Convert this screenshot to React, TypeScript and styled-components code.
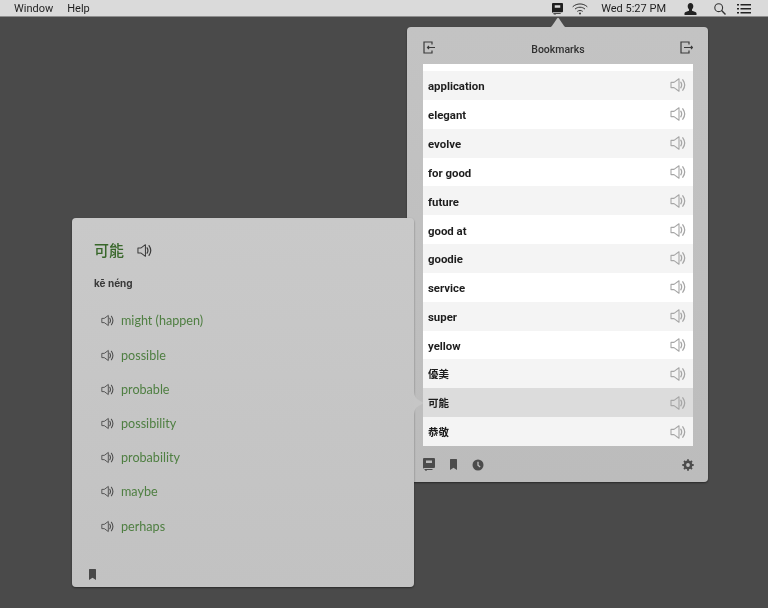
import React from "react";
import styled, { createGlobalStyle } from "styled-components";

const Global = createGlobalStyle`
  html, body { margin: 0; padding: 0; width: 768px; height: 608px; overflow: hidden; background: #4a4a4a; }
  #root { width: 768px; height: 608px; }
  * { box-sizing: border-box; }
`;

const Desktop = styled.div`
  position: relative;
  width: 768px;
  height: 608px;
  background: #4a4a4a;
  font-family: "Roboto", "Noto Sans CJK TC", sans-serif;
  overflow: hidden;
  filter: blur(0.35px);
`;

const MenuBar = styled.header`
  height: 17px;
  background: #dadada;
  border-bottom: 1px solid #8e8e8e;
  display: flex;
  align-items: center;
  padding: 1px 17px 0 14px;
  font-size: 11px;
  color: #1f1f1f;
`;
const MenuLeft = styled.nav`
  display: flex;
  gap: 14px;
  flex: 1;
`;
const MenuRight = styled.div`
  display: flex;
  align-items: center;
`;
const Clock = styled.span`
  margin: 0 18px 0 13px;
  white-space: nowrap;
`;
const MenuGap = styled.span<{ $w: number }>`
  display: block;
  flex: none;
  width: ${(p) => p.$w}px;
`;

const Panel = styled.section`
  position: absolute;
  left: 407px;
  top: 27px;
  width: 301px;
  height: 455px;
  background: linear-gradient(#c3c3c3, #bcbcbc);
  border-radius: 4px;
  box-shadow: 0 1px 2px rgba(0, 0, 0, 0.45);
  display: flex;
  flex-direction: column;
  padding: 0 15px 0 16px;
`;
const TopArrow = styled.svg`
  position: absolute;
  left: 139px;
  top: -10px;
  display: block;
`;
const PanelHeader = styled.div`
  height: 37px;
  flex: none;
  display: flex;
  align-items: center;
  justify-content: space-between;
  padding-top: 7px;
  color: #3a3a3a;
`;
const PanelTitle = styled.h1`
  margin: 0;
  font-size: 10.5px;
  font-weight: 500;
  color: #303030;
`;
const WordTable = styled.ul`
  list-style: none;
  margin: 0;
  padding: 7px 0 0;
  height: 382px;
  flex: none;
  background: #fff;
  display: grid;
  grid-auto-rows: 28.85px;
`;
const WordRow = styled.li<{ $tone: "white" | "grey" | "active" }>`
  display: flex;
  align-items: center;
  justify-content: space-between;
  padding: 0 7px 0 5px;
  background: ${(p) => (p.$tone === "active" ? "#dcdcdc" : p.$tone === "grey" ? "#f4f4f4" : "#fff")};
  font-weight: 700;
  color: #1d1d1d;
`;
const RowWord = styled.span<{ $cjk: boolean }>`
  font-size: ${(p) => (p.$cjk ? "10.5px" : "11.4px")};
  transform: translateY(${(p) => (p.$cjk ? "0" : "1px")});
`;
const RowSpeaker = styled.span`
  display: flex;
  color: #a6a6a6;
`;
const PanelFooter = styled.footer`
  flex: 1;
  display: flex;
  align-items: center;
  padding: 1px 0 0;
  margin-right: -1px;
  color: #4c4c4c;
`;
const FooterTabs = styled.div`
  display: flex;
  align-items: center;
  gap: 15px;
  flex: 1;
`;

const Detail = styled.section`
  position: absolute;
  left: 72px;
  top: 218px;
  width: 342px;
  height: 369px;
  background: linear-gradient(#c9c9c9, #c2c2c2);
  border-radius: 4px;
  box-shadow: 0 1px 2px rgba(0, 0, 0, 0.45);
  padding: 21px 0 0 22px;
  display: flex;
  flex-direction: column;
`;
const SideArrow = styled.svg`
  position: absolute;
  left: 342px;
  top: 171px;
  display: block;
`;
const HeadLine = styled.div`
  display: flex;
  align-items: center;
  gap: 13px;
  color: #3c3c3c;
`;
const HeadWord = styled.h2`
  margin: 0;
  font-size: 15px;
  line-height: 22px;
  font-weight: 500;
  color: #38672a;
  font-family: "Noto Sans CJK TC", sans-serif;
`;
const Pinyin = styled.div`
  margin-top: 15px;
  font-size: 10px;
  line-height: 14px;
  font-weight: 700;
  font-family: "Inter", sans-serif;
  color: #3a3a3a;
`;
const Meanings = styled.ul`
  list-style: none;
  margin: 13.85px 0 0;
  padding: 0 0 0 7px;
  display: grid;
  grid-auto-rows: 34.2px;
`;
const Meaning = styled.li`
  display: flex;
  align-items: center;
  gap: 7px;
  color: #4a4a4a;
  font-family: "Lato", sans-serif;
  font-size: 12.6px;
`;
const MeaningText = styled.span`
  color: #4f7f42;
`;
const DetailFooter = styled.footer`
  margin-top: auto;
  padding: 0 0 7px;
  margin-left: -5px;
  display: flex;
  color: #484848;
`;
const ExitSvg = styled.svg`
  display: block;
  margin-top: -3px;
`;

const Speaker = ({ size = 14 }: { size?: number }) => (
  <svg width={size} height={size} viewBox="0 0 16 16" fill="none" stroke="currentColor" strokeWidth={1.1}>
    <path d="M1 5.400h3L9 1.800v12.400L4 10.600H1z" strokeLinejoin="round" />
    <path d="M10.800 5.200c1.100 1.800 1.100 3.800 0 5.600M12.800 2.800c2.300 3.200 2.300 7.200 0 10.400" strokeLinecap="round" strokeWidth={1.3} />
  </svg>
);
const BookmarkIcon = ({ w = 7, h = 11 }: { w?: number; h?: number }) => (
  <svg width={w} height={h} viewBox="0 0 7 11" fill="currentColor">
    <path d="M0 .6Q0 0 .6 0h5.800Q7 0 7 .6V11L3.500 8.800 0 11z" />
  </svg>
);
const BookIcon = ({ size = 12 }: { size?: number }) => (
  <svg width={size} height={size + 1} viewBox="0 0 12 13" fill="currentColor">
    <path fillRule="evenodd" d="M1 0h10q1 0 1 1v8q0 1-1 1H1.500q-1.500 0-1.500 1V1q0-1 1-1zM3 2.500v2.500h6V2.500z" />
    <path d="M1.500 11h8v.9H4v1L3 12.300 2 12.900v-1h-.5z" />
  </svg>
);
const ClockIcon = () => (
  <svg width={12} height={12} viewBox="0 0 12 12">
    <circle cx="6" cy="6" r="5.500" fill="currentColor" />
    <path d="M6 2.800V6.200l2.200 1.700" fill="none" stroke="#c0c0c0" strokeWidth={1.300} />
  </svg>
);
const GearIcon = () => (
  <svg width={12} height={12} viewBox="0 0 12 12">
    <circle cx="6" cy="6" r="3.300" fill="none" stroke="currentColor" strokeWidth={2.200} />
    <path d="M6 6V.3M6 6v5.700M6 6H.3M6 6h5.700M6 6 2 2M6 6l4 4M6 6l4-4M6 6l-4 4" stroke="currentColor" strokeWidth={1.800} />
    <circle cx="6" cy="6" r="1.900" fill="#c0c0c0" />
  </svg>
);
const ExitIcon = ({ flip }: { flip?: boolean }) => (
  <ExitSvg width={13} height={13} viewBox="0 0 13 13" fill="none" stroke="currentColor" strokeWidth={1.200}>
    <path d="M9 3.500V1H1v11h8V9.500" />
    {flip ? <path d="M4 6.500h8.500M11 5l1.500 1.500L11 8" /> : <path d="M12 6.500H4.500M6 5 4.500 6.500 6 8" />}
  </ExitSvg>
);
const WifiIcon = () => (
  <svg width={16} height={12} viewBox="0 0 16 12" fill="none" stroke="#333" strokeWidth={1}>
    <path d="M.7 3.800C4.800 0 11.200 0 15.300 3.800M3 6.100c2.900-2.500 7.100-2.500 10 0M5.300 8.400c1.600-1.200 3.800-1.200 5.400 0" />
    <circle cx="8" cy="10.500" r="1" fill="#333" stroke="none" />
  </svg>
);
const UserIcon = () => (
  <svg width={13} height={12} viewBox="0 0 13 12" fill="#222">
    <path d="M6.500 0C8.300 0 9.300 1.300 9.300 3.200c0 1.400-.6 2.500-1.300 3.200v1.300c1.800.6 4 1.200 4.500 2.300V12H.5v-2c.5-1.100 2.700-1.700 4.500-2.300V6.400C4.300 5.700 3.700 4.600 3.700 3.200 3.700 1.300 4.700 0 6.500 0z" />
  </svg>
);
const SearchIcon = () => (
  <svg width={12} height={12} viewBox="0 0 12 12" fill="none" stroke="#333" strokeWidth={1.100}>
    <circle cx="4.700" cy="4.700" r="3.900" />
    <path d="M7.600 7.600 11.500 11.500" strokeWidth={1.400} />
  </svg>
);
const ListIcon = () => (
  <svg width={14} height={10} viewBox="0 0 14 10" fill="#222">
    <path d="M0 0h2v1.500H0zM3.500 0H14v1.500H3.500zM0 4h2v1.500H0zM3.500 4H14v1.500H3.500zM0 8h2v1.500H0zM3.500 8H14v1.500H3.500z" />
  </svg>
);

const words = ["application","elegant","evolve","for good","future","good at","goodie","service","super","yellow","優美","可能","恭敬"];
const meanings = ["might (happen)","possible","probable","possibility","probability","maybe","perhaps"];

export default function App() {
  return (
    <Desktop>
      <Global />
      <MenuBar>
        <MenuLeft>
          <span>Window</span>
          <span>Help</span>
        </MenuLeft>
        <MenuRight>
          <BookIcon size={11} />
          <MenuGap $w={9} />
          <WifiIcon />
          <Clock>Wed 5:27 PM</Clock>
          <UserIcon />
          <MenuGap $w={17} />
          <SearchIcon />
          <MenuGap $w={11} />
          <ListIcon />
        </MenuRight>
      </MenuBar>
      <Panel>
        <TopArrow width={24} height={11} viewBox="0 0 24 11" fill="#c3c3c3">
          <path d="M0 11c5 0 6-2 8-5l3-4.600q1-1.200 2 0l3 4.600c2 3 3 5 8 5z" />
        </TopArrow>
        <PanelHeader>
          <ExitIcon />
          <PanelTitle>Bookmarks</PanelTitle>
          <ExitIcon flip />
        </PanelHeader>
        <WordTable>
          {words.map((w, i) => (
            <WordRow key={w} $tone={w === "可能" ? "active" : i % 2 === 0 ? "grey" : "white"}>
              <RowWord $cjk={i >= 10}>{w}</RowWord>
              <RowSpeaker>
                <Speaker size={16} />
              </RowSpeaker>
            </WordRow>
          ))}
        </WordTable>
        <PanelFooter>
          <FooterTabs>
            <BookIcon />
            <BookmarkIcon />
            <ClockIcon />
          </FooterTabs>
          <GearIcon />
        </PanelFooter>
      </Panel>
      <Detail>
        <SideArrow width={10} height={28} viewBox="0 0 10 28" fill="#c6c6c6">
          <path d="M0 0c0 6 1 8 3 10l5.500 3.300q1 .7 0 1.400L3 18c-2 2-3 4-3 10z" />
        </SideArrow>
        <HeadLine>
          <HeadWord>可能</HeadWord>
          <Speaker size={15} />
        </HeadLine>
        <Pinyin>kē néng</Pinyin>
        <Meanings>
          {meanings.map((m) => (
            <Meaning key={m}>
              <Speaker size={13} />
              <MeaningText>{m}</MeaningText>
            </Meaning>
          ))}
        </Meanings>
        <DetailFooter>
          <BookmarkIcon />
        </DetailFooter>
      </Detail>
    </Desktop>
  );
}
